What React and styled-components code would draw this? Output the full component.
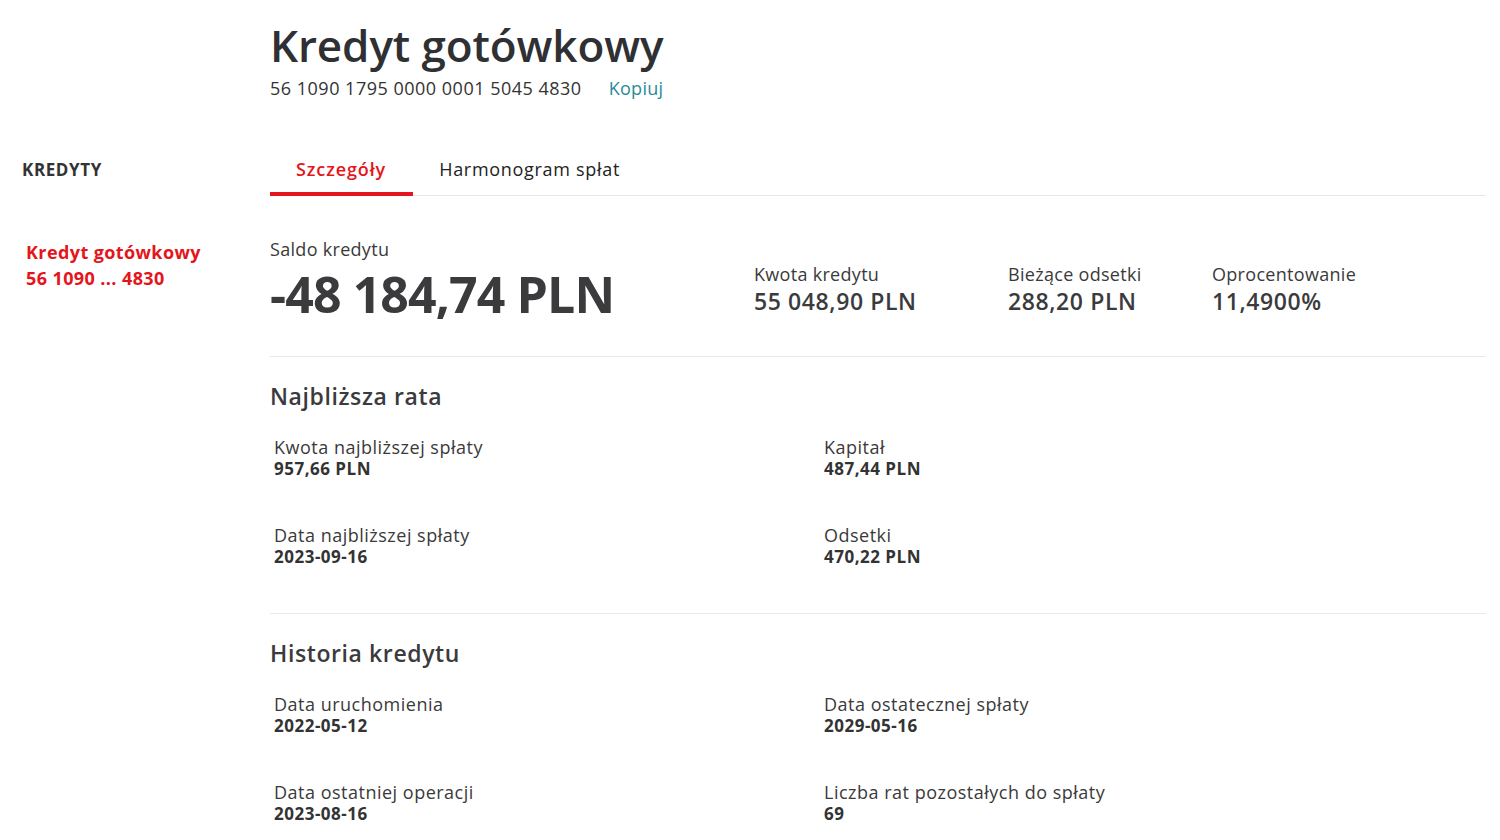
import React from "react";
import styled, { createGlobalStyle } from "styled-components";

const GlobalStyle = createGlobalStyle`
  body {
    margin: 0;
    background: #fff;
    font-family: "Open Sans", "Noto Sans", sans-serif;
    color: #333;
  }
`;

const Page = styled.div`
  display: grid;
  grid-template-columns: 270px 1fr;
  grid-template-rows: auto 1fr;
  width: 1486px;
`;

const Header = styled.header`
  grid-column: 2;
  padding-top: 16px;
  height: 132px;
  box-sizing: border-box;

  h1 {
    margin: 0;
    font-size: 44px;
    line-height: 58px;
    font-weight: 600;
    letter-spacing: -0.1px;
    color: #2f3033;
  }
`;

const AccountRow = styled.div`
  display: flex;
  align-items: center;
  gap: 27px;
  font-size: 18px;
  line-height: 24px;
  margin-top: 2px;
  color: #333;
  letter-spacing: 0.5px;
`;

const CopyLink = styled.a`
  color: #2a8c96;
  cursor: pointer;
  letter-spacing: 0.3px;
`;

const Sidebar = styled.aside`
  padding-left: 22px;
  padding-top: 26px;

  h3 {
    margin: 0;
    font-size: 17px;
    font-weight: 700;
    color: #333;
    letter-spacing: 0.6px;
  }
`;

const SideLink = styled.a`
  display: block;
  margin: 58px 0 0 4px;
  color: #e4151b;
  font-weight: 700;
  font-size: 18px;
  line-height: 26px;
  letter-spacing: 0.4px;
`;

const Content = styled.main``;

const Tabs = styled.nav`
  display: flex;
  border-bottom: 1px solid #e2e7ea;
  height: 64px;
  box-sizing: border-box;
  align-items: flex-end;
`;

const Tab = styled.div`
  padding: 0 27px 11px 26px;
  font-size: 18px;
  line-height: 24px;
  font-weight: ${(p) => (p.$active ? 600 : 500)};
  color: ${(p) => (p.$active ? "#e4151b" : "#222")};
  border-bottom: 4px solid ${(p) => (p.$active ? "#e4151b" : "transparent")};
  margin-bottom: -1px;
  letter-spacing: ${(p) => (p.$active ? 0.9 : 0.7)}px;
`;

const Summary = styled.section`
  display: flex;
  align-items: flex-start;
  padding: 41px 0 31px;
  border-bottom: 1px solid #e5e9ec;
`;

const Balance = styled.div`
  width: 484px;
`;

const Label = styled.div`
  font-size: 18px;
  line-height: ${(p) => (p.$tall ? 24 : 22)}px;
  color: #3a3a3a;
  letter-spacing: ${(p) => (p.$tall ? 0.3 : 0.5)}px;
`;

const BigAmount = styled.div`
  font-size: 50px;
  line-height: 62px;
  margin-top: 2px;
  font-weight: 700;
  color: #3b3b3d;
  letter-spacing: -0.9px;
`;

const Stat = styled.div`
  width: ${(p) => p.$width}px;
  padding-top: 25px;
`;

const StatValue = styled.div`
  font-size: 23px;
  line-height: 30px;
  font-weight: 600;
  color: #3b3b3d;
  letter-spacing: 0.6px;
`;

const Section = styled.section`
  padding: 24px 0 ${(p) => (p.$last ? 18 : 45)}px;
  border-bottom: ${(p) => (p.$last ? "none" : "1px solid #e5e9ec")};

  h2 {
    margin: 0 0 25px;
    font-size: 23px;
    line-height: 30px;
    font-weight: 600;
    color: #3b3b3d;
    letter-spacing: 0.6px;
  }
`;

const Grid = styled.div`
  display: grid;
  grid-template-columns: 550px 1fr;
  row-gap: 44px;
  padding-left: 4px;
`;

const Value = styled.div`
  font-size: 17px;
  line-height: 22px;
  font-weight: 700;
  color: #333;
  letter-spacing: 0.5px;
`;

const Field = ({ label, value }) => (
  <div>
    <Label>{label}</Label>
    <Value>{value}</Value>
  </div>
);

const nextRate = [
  ["Kwota najbliższej spłaty", "957,66 PLN"],
  ["Kapitał", "487,44 PLN"],
  ["Data najbliższej spłaty", "2023-09-16"],
  ["Odsetki", "470,22 PLN"],
];

const history = [
  ["Data uruchomienia", "2022-05-12"],
  ["Data ostatecznej spłaty", "2029-05-16"],
  ["Data ostatniej operacji", "2023-08-16"],
  ["Liczba rat pozostałych do spłaty", "69"],
];

export default function App() {
  return (
    <>
      <GlobalStyle />
      <Page>
        <Header>
          <h1>Kredyt gotówkowy</h1>
          <AccountRow>
            <span>56 1090 1795 0000 0001 5045 4830</span>
            <CopyLink>Kopiuj</CopyLink>
          </AccountRow>
        </Header>
        <Sidebar>
          <h3>KREDYTY</h3>
          <SideLink>
            Kredyt gotówkowy
            <br />
            56 1090 ... 4830
          </SideLink>
        </Sidebar>
        <Content>
          <Tabs>
            <Tab $active>Szczegóły</Tab>
            <Tab>Harmonogram spłat</Tab>
          </Tabs>
          <Summary>
            <Balance>
              <Label $tall>Saldo kredytu</Label>
              <BigAmount>-48 184,74 PLN</BigAmount>
            </Balance>
            <Stat $width={254}>
              <Label $tall>Kwota kredytu</Label>
              <StatValue>55 048,90 PLN</StatValue>
            </Stat>
            <Stat $width={204}>
              <Label $tall>Bieżące odsetki</Label>
              <StatValue>288,20 PLN</StatValue>
            </Stat>
            <Stat $width={200}>
              <Label $tall>Oprocentowanie</Label>
              <StatValue>11,4900%</StatValue>
            </Stat>
          </Summary>
          <Section>
            <h2>Najbliższa rata</h2>
            <Grid>
              {nextRate.map(([l, v]) => (
                <Field key={l} label={l} value={v} />
              ))}
            </Grid>
          </Section>
          <Section $last>
            <h2>Historia kredytu</h2>
            <Grid>
              {history.map(([l, v]) => (
                <Field key={l} label={l} value={v} />
              ))}
            </Grid>
          </Section>
        </Content>
      </Page>
    </>
  );
}
